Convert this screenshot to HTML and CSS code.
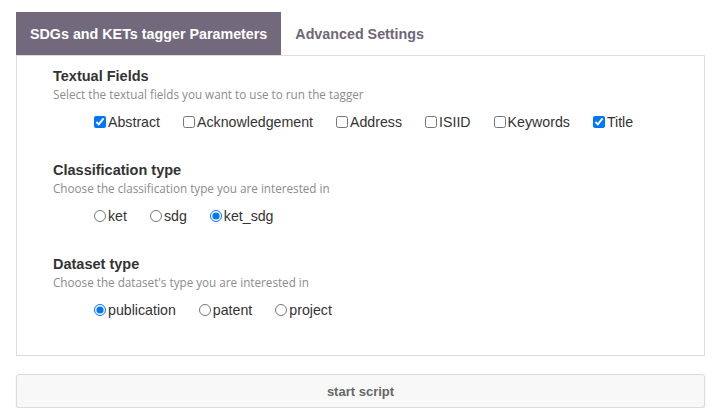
FILE: index.html
```html
<!DOCTYPE html>
<html lang="en">
<head>
    <meta charset="UTF-8">
    <meta name="viewport" content="width=device-width, initial-scale=1.0">
    <title>SDGs and KETs tagger</title>
    <link rel="stylesheet" href="styles.css">
</head>
<body>
    <div class="tabs">
        <div class="tab active">SDGs and KETs tagger Parameters</div>
        <div class="tab">Advanced Settings</div>
    </div>
    <div class="panel">
        <div class="section">
            <div class="title">Textual Fields</div>
            <div class="help">Select the textual fields you want to use to run the tagger</div>
            <div class="options">
                <label><input type="checkbox" checked>Abstract</label>
                <label><input type="checkbox">Acknowledgement</label>
                <label><input type="checkbox">Address</label>
                <label><input type="checkbox">ISIID</label>
                <label><input type="checkbox">Keywords</label>
                <label><input type="checkbox" checked>Title</label>
            </div>
        </div>
        <div class="section">
            <div class="title">Classification type</div>
            <div class="help">Choose the classification type you are interested in</div>
            <div class="options">
                <label><input type="radio" name="ctype">ket</label>
                <label><input type="radio" name="ctype">sdg</label>
                <label><input type="radio" name="ctype" checked>ket_sdg</label>
            </div>
        </div>
        <div class="section">
            <div class="title">Dataset type</div>
            <div class="help">Choose the dataset's type you are interested in</div>
            <div class="options">
                <label><input type="radio" name="dtype" checked>publication</label>
                <label><input type="radio" name="dtype">patent</label>
                <label><input type="radio" name="dtype">project</label>
            </div>
        </div>
    </div>
    <button class="start">start script</button>
</body>
</html>
```

FILE: styles.css
```css
body {
    font-family: "Liberation Sans", Arial, sans-serif;
    margin: 0;
    padding: 12px 13px 0 16px;
    color: #333;
    background: white;
}
.tabs {
    display: flex;
    height: 43px;
}
.tab {
    padding: 0 14px;
    display: flex;
    align-items: center;
    font-size: 14.3px;
    font-weight: bold;
    color: #6e6778;
}
.tab.active {
    background: #726a7c;
    color: white;
}
.panel {
    border: 1px solid #dcdcdc;
    padding: 11px 36px 6px 36px;
}
.section {
    margin-bottom: 29px;
}
.title {
    font-size: 14.5px;
    font-weight: bold;
    line-height: 18px;
}
.help {
    font-family: "Open Sans", sans-serif;
    font-size: 11.7px;
    color: #8c8c8c;
    line-height: 18px;
}
.options {
    display: flex;
    margin-top: 9px;
    padding-left: 37px;
    height: 20px;
    align-items: center;
}
.options label {
    font-size: 14.2px;
    margin-right: 19px;
    display: flex;
    align-items: center;
}
.options input {
    width: 12px;
    height: 12px;
    margin: 0 2px 0 4px;
}
.start {
    display: block;
    width: 100%;
    margin-top: 18px;
    height: 34px;
    background: #f8f8f8;
    border: 1px solid #dcdcdc;
    border-radius: 3px;
    box-shadow: 0 1px 2px rgba(0, 0, 0, 0.1);
    font-family: "Liberation Sans Narrow", "Liberation Sans", sans-serif;
    font-weight: bold;
    font-size: 13px;
    color: #666;
}
```
